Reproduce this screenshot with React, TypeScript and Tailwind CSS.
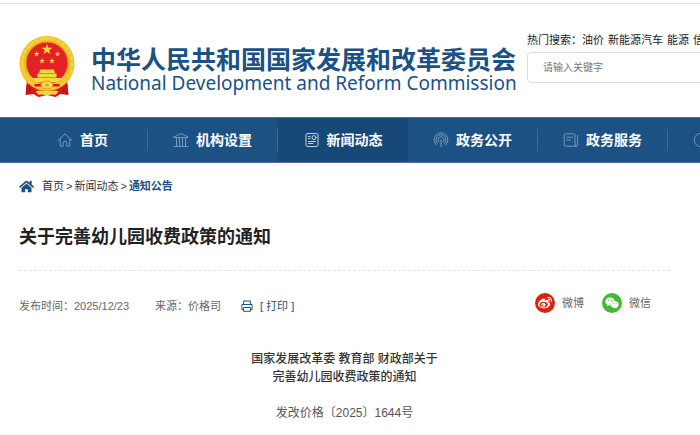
import { type ReactNode } from 'react'
import { FaHome, FaWeibo, FaWeixin } from 'react-icons/fa'

type NavItem = {
  label: string
  icon: ReactNode
  active?: boolean
}

function NavIcon({ children }: { children: ReactNode }) {
  return (
    <svg viewBox="0 0 16 16" className="size-4 shrink-0" fill="none" stroke="currentColor" strokeWidth="1" strokeLinecap="round" strokeLinejoin="round" aria-hidden="true">
      {children}
    </svg>
  )
}

const NAV: NavItem[] = [
  {
    label: '首页',
    icon: <NavIcon><path d="M1 8.6 8 1.8l7 6.8M3.2 7.2v7h2.9v-3a1.9 1.9 0 0 1 3.8 0v3h2.9v-7" /></NavIcon>,
  },
  {
    label: '机构设置',
    icon: <NavIcon><path d="M1 4.9 8 1.6l7 3.3v.7H1ZM1 14.5h14M3.5 5.6v8.7M6.5 5.6v8.7M9.5 5.6v8.7M12.5 5.6v8.7" /></NavIcon>,
  },
  {
    label: '新闻动态',
    active: true,
    icon: (
      <NavIcon>
        <rect x="2" y="1.5" width="12" height="13" rx="1.5" />
        <circle cx="10" cy="5.6" r="2" />
        <path d="M4.5 4.5h1.6M4.5 6.5h1.6M4.5 9.5h7M4.5 11.5h4.5" />
      </NavIcon>
    ),
  },
  {
    label: '政务公开',
    icon: <NavIcon><path d="M3.6 13a6.9 6.9 0 1 1 8.8 0M4.8 11.4a4.9 4.9 0 1 1 6.4 0M6 9.8a2.9 2.9 0 1 1 4 0M8 7.8v7" /></NavIcon>,
  },
  {
    label: '政务服务',
    icon: <NavIcon><path d="M12 12.4V3a1.2 1.2 0 0 0-1.2-1.2H2.4A1.2 1.2 0 0 0 1.2 3v10a1.2 1.2 0 0 0 1.2 1.2h11A1.2 1.2 0 0 0 14.6 13V3.4M12 12.4a1.2 1.2 0 0 0 1.4 1.8M3.6 5.2h6M3.6 8h4" /></NavIcon>,
  },
  {
    label: '互动交流',
    icon: <NavIcon><circle cx="8" cy="8" r="6.8" /><path d="M8 4v4.4h3" /></NavIcon>,
  },
]

const HOT_WORDS = ['油价', '新能源汽车', '能源', '信用']

const STAR = 'M0-10 2.4-3.1 9.5-3.1 3.8 1.2 5.9 8.1 0 4-5.9 8.1-3.8 1.2-9.5-3.1-2.4-3.1Z'

function Emblem() {
  return (
    <svg viewBox="0 0 112 122" className="h-[61px] w-14 shrink-0" role="img" aria-label="国徽">
      <path d="M16 88 13 118l16-2 10 6 17-4 17 4 10-6 16 2-3-30Z" fill="#d9161c" />
      <circle cx="56" cy="55" r="55" fill="#f0bf25" />
      <circle cx="56" cy="55" r="50" fill="none" stroke="#f6d043" strokeWidth="6" strokeDasharray="9 2" />
      <circle cx="56" cy="54" r="42" fill="#e71f26" stroke="#d69a1a" strokeWidth="2" />
      <g fill="#f9d93c">
        <path d={STAR} transform="translate(56 27) scale(1.15)" />
        <path d={STAR} transform="translate(35 36) scale(.6)" />
        <path d={STAR} transform="translate(77 36) scale(.6)" />
        <path d={STAR} transform="translate(46 50) scale(.6)" />
        <path d={STAR} transform="translate(66 50) scale(.6)" />
        <path d="M42 67h28l2 7H40ZM37 75h38v8H37ZM20 84h72l-7 8H27Z" />
      </g>
      <path d="M13 80c9 4 16 12 25 18M99 80c-9 4-16 12-25 18" fill="none" stroke="#f3c52c" strokeWidth="8" />
      <path d="M31 96h50v5H31Z" fill="#d9161c" />
      <ellipse cx="56" cy="98" rx="12" ry="8" fill="#f8d84a" stroke="#d99c18" strokeWidth="2" />
      <ellipse cx="56" cy="98" rx="4" ry="3" fill="#ee9f20" />
      <path d="M33 111c8-5 15 1 23-2 8 3 15-3 23 2l-6 7c-7-3-11 2-17 0-6 2-10-3-17 0Z" fill="#f6d043" />
      <path d="M16 98v19M22 102v14M90 102v14M96 98v19" stroke="#b30f16" strokeWidth="2" />
    </svg>
  )
}

function PrintIcon() {
  return (
    <svg viewBox="0 0 12 12" className="size-3" fill="none" stroke="currentColor" strokeWidth="1" strokeLinejoin="round" aria-hidden="true">
      <path d="M2.6 4.5V1h6.8v3.5M2.6 9.5H.9v-5h10.2v5H9.4M2.6 7.5h6.8v3.8H2.6Z" />
    </svg>
  )
}

function Header() {
  return (
    <header className="mt-[3px] flex h-[114px] overflow-hidden border-t border-[#dbe1ea] pl-[19px]">
      <a href="#" className="flex shrink-0 items-start pt-8">
        <Emblem />
        <span className="ml-4 flex w-[436px] flex-col pt-3 whitespace-nowrap text-[#1b5185]">
          <span className="text-[25px] leading-[25px] font-bold">中华人民共和国国家发展和改革委员会</span>
          <span className="font-['Noto_Sans'] text-[19px] leading-5">National Development and Reform Commission</span>
        </span>
      </a>
      <div className="flex shrink-0 flex-col pt-7">
        <div className="flex gap-1 text-[11px] leading-4 whitespace-nowrap text-[#222]">
          <span>
            热门搜索：<a href="#">{HOT_WORDS[0]}</a>
          </span>
          {HOT_WORDS.slice(1).map((w) => (
            <a key={w} href="#">{w}</a>
          ))}
        </div>
        <input
          type="text"
          aria-label="搜索"
          placeholder="请输入关键字"
          className="mt-1 h-[31px] w-[280px] rounded border border-[#dcdcdc] px-[15px] text-[10px] text-gray-700 placeholder:text-[#757575]"
        />
      </div>
    </header>
  )
}

function Nav() {
  return (
    <nav className="flex h-[46px] overflow-hidden border-y border-t-[#46729c] border-b-[#46729c] bg-[#1b5183] pl-[18px]">
      {NAV.map((item) => (
        <a
          key={item.label}
          href="#"
          className={`flex w-[130px] shrink-0 items-center ${item.active ? 'bg-[#164977]' : ''}`}
        >
          <span className="flex flex-1 items-center justify-center gap-[7px]">
            <span className={item.active ? 'text-[#c3d2e0]' : 'text-[#7799b9]'}>{item.icon}</span>
            <span className="text-sm font-bold text-white">{item.label}</span>
          </span>
          {!item.active && <span className="h-[22px] w-px bg-[#3d6b97]" />}
        </a>
      ))}
    </nav>
  )
}

export default function App() {
  return (
    <div className="overflow-x-hidden bg-white font-['Liberation_Sans','Noto_Sans_CJK_SC',sans-serif] text-[#333]">
      <Header />
      <Nav />
      <main className="pr-[30px] pl-[19px]">
        <div className="flex items-center pt-[15px] text-[11px] leading-4">
          <FaHome className="mr-2 size-[15px] text-[#1b5185]" />
          <div className="flex gap-0.5">
            <a href="#">首页</a>
            <span>&gt;</span>
            <a href="#">新闻动态</a>
            <span>&gt;</span>
            <a href="#" className="font-bold text-[#1b5185]">通知公告</a>
          </div>
        </div>

        <h1 className="mt-[29px] border-b border-dashed border-[#e3e3e3] pb-[19px] text-lg leading-7 font-bold text-[#222]">
          关于完善幼儿园收费政策的通知
        </h1>

        <div className="mt-[22px] flex items-start text-[11px] leading-4 text-[#666]">
          <div className="flex pt-[5px]">
            <span className="w-[136px]">发布时间：2025/12/23</span>
            <span className="w-[86px]">来源：价格司</span>
            <button type="button" className="flex items-center gap-[7px] text-[#1b5185]">
              <PrintIcon />
              [ 打印 ]
            </button>
          </div>
          <div className="ml-auto flex gap-[18px] pr-[19px]">
            <a href="#" className="flex items-center gap-[7px]">
              <span className="flex size-5 items-center justify-center rounded-full bg-[#d9230f] text-white">
                <FaWeibo className="size-3.5" />
              </span>
              微博
            </a>
            <a href="#" className="flex items-center gap-[7px]">
              <span className="flex size-5 items-center justify-center rounded-full bg-[#43b934] text-white">
                <FaWeixin className="size-3.5" />
              </span>
              微信
            </a>
          </div>
        </div>

        <article className="mt-9 pb-3 text-center text-xs leading-[18px]">
          <h2 className="font-medium">
            国家发展改革委 教育部 财政部关于
            <br />
            完善幼儿园收费政策的通知
          </h2>
          <p className="mt-[18px] text-[#555]">发改价格〔2025〕1644号</p>
        </article>
      </main>
    </div>
  )
}
